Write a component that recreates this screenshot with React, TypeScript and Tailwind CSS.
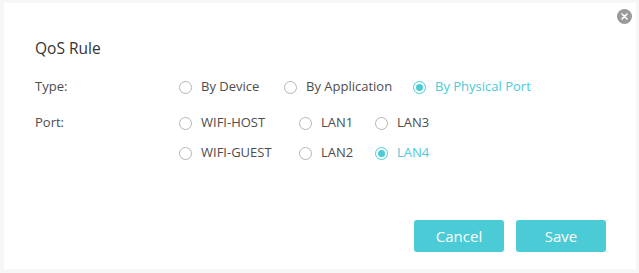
const teal = "#4acbd6";

function Radio({ label, checked = false, width }: { label: string; checked?: boolean; width: string }) {
  return (
    <label className={`flex items-center ${width}`}>
      <span
        className={`w-[13px] h-[13px] rounded-full border flex items-center justify-center ${
          checked ? "border-[#4acbd6]" : "border-[#b5b5b5]"
        }`}
      >
        {checked && <span className="w-[7px] h-[7px] rounded-full bg-[#4acbd6]" />}
      </span>
      <span className={`ml-[9px] text-[13px] ${checked ? "text-[#4acbd6]" : "text-[#4d4d4d]"}`}>{label}</span>
    </label>
  );
}

export default function App() {
  return (
    <div className="w-[639px] h-[273px] bg-[#f7f7f7] pl-[4px] pr-[3px] pt-[3px] pb-[4px]" style={{ fontFamily: '"Open Sans", "Liberation Sans", sans-serif' }}>
      <div className="relative w-full h-full bg-white">
        <button className="absolute right-[4px] top-[6px] w-[15px] h-[15px] rounded-full bg-[#9a9a9a] flex items-center justify-center">
          <svg width="7" height="7" viewBox="0 0 7 7">
            <path d="M1 1 L6 6 M6 1 L1 6" stroke="#fff" strokeWidth="1.6" strokeLinecap="round" />
          </svg>
        </button>

        <div className="pl-[31px] pt-[35px]">
          <h1 className="text-[15.5px] leading-[20px] text-[#333]">QoS Rule</h1>

          <div className="flex mt-[18px] h-[22px] items-center">
            <div className="w-[144px] text-[13px] text-[#4d4d4d]">Type:</div>
            <Radio label="By Device" width="w-[105px]" />
            <Radio label="By Application" width="w-[129px]" />
            <Radio label="By Physical Port" checked width="w-auto" />
          </div>

          <div className="flex mt-[14px]">
            <div className="w-[144px] text-[13px] text-[#4d4d4d] h-[22px] flex items-center">Port:</div>
            <div className="flex flex-col gap-[8px]">
              <div className="flex h-[22px] items-center">
                <Radio label="WIFI-HOST" width="w-[120px]" />
                <Radio label="LAN1" width="w-[76px]" />
                <Radio label="LAN3" width="w-auto" />
              </div>
              <div className="flex h-[22px] items-center">
                <Radio label="WIFI-GUEST" width="w-[120px]" />
                <Radio label="LAN2" width="w-[76px]" />
                <Radio label="LAN4" checked width="w-auto" />
              </div>
            </div>
          </div>

          <div className="flex justify-end gap-[12px] pr-[30px] mt-[56px]">
            <button className="w-[90px] h-[32px] rounded-[3px] text-white text-[15px]" style={{ backgroundColor: teal }}>
              Cancel
            </button>
            <button className="w-[90px] h-[32px] rounded-[3px] text-white text-[15px]" style={{ backgroundColor: teal }}>
              Save
            </button>
          </div>
        </div>
      </div>
    </div>
  );
}
